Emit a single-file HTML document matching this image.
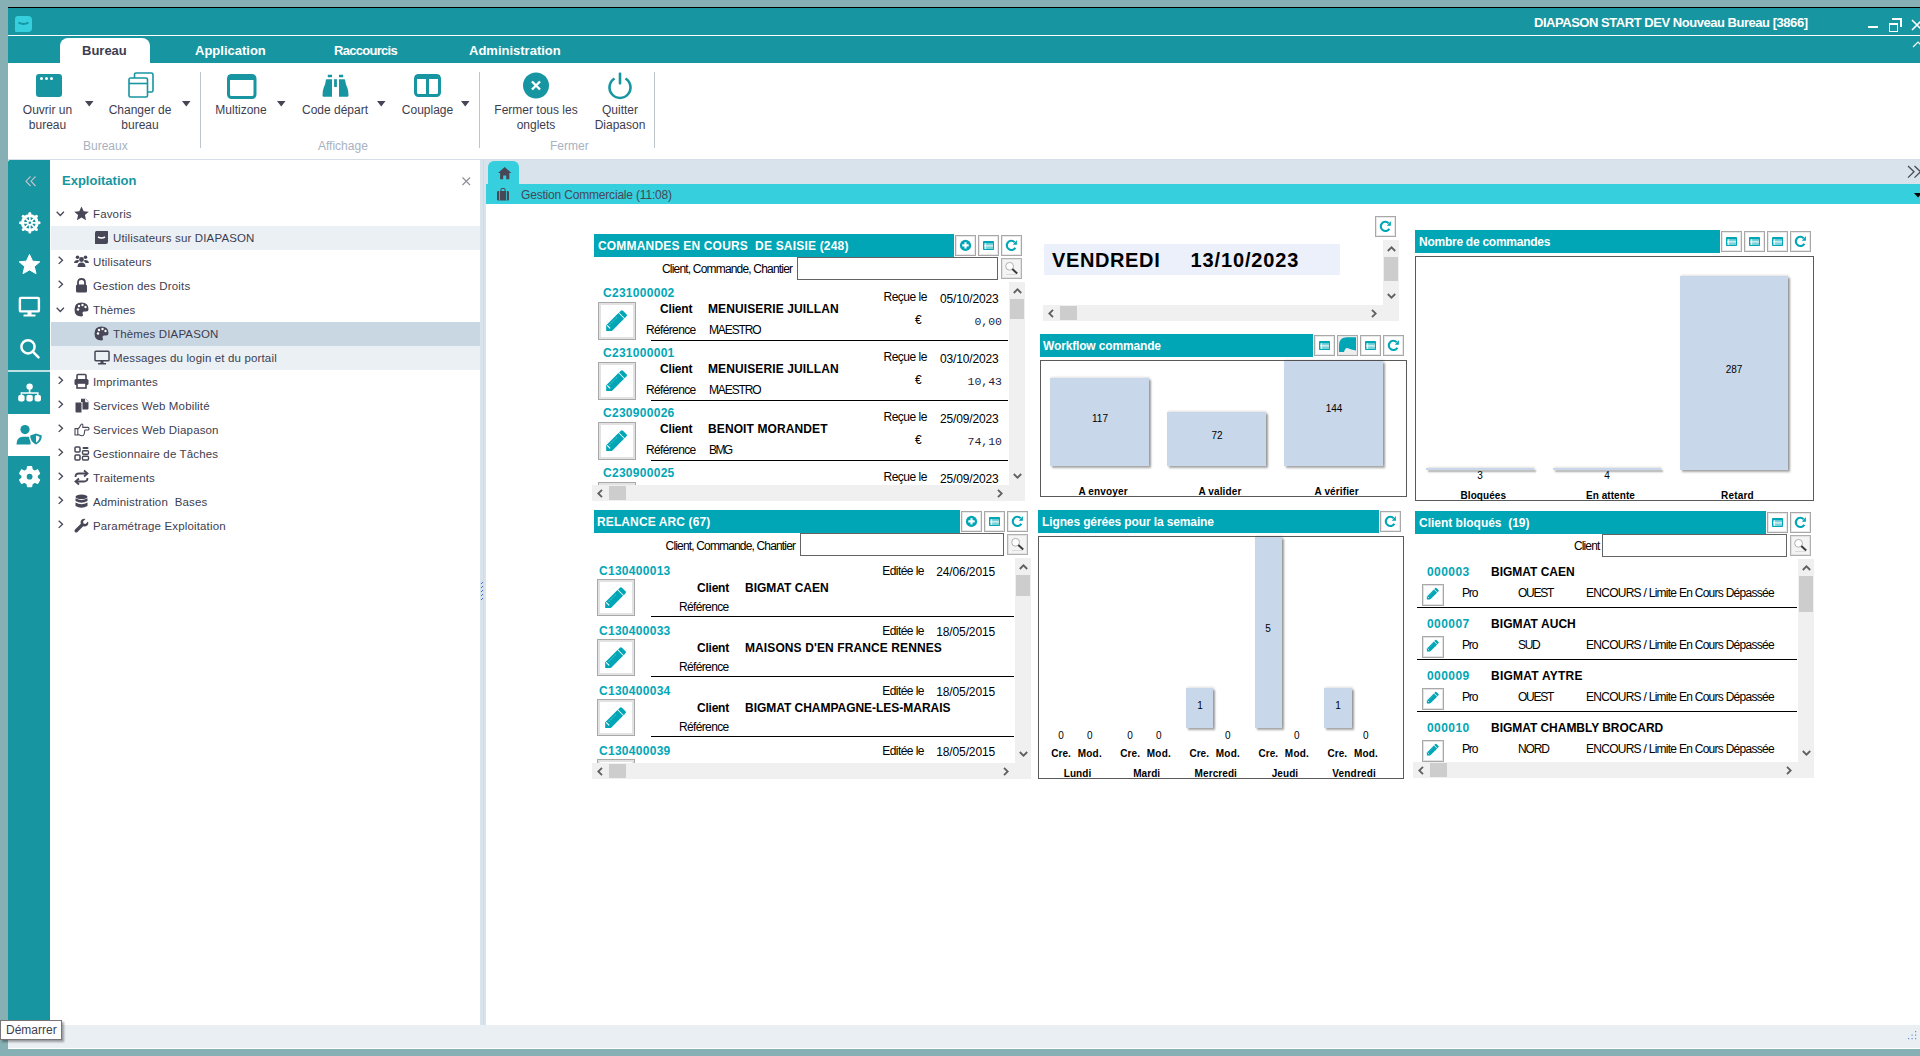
<!DOCTYPE html>
<html><head><meta charset="utf-8">
<style>
*{margin:0;padding:0;box-sizing:border-box}
html,body{width:1920px;height:1056px;overflow:hidden;background:#87B0B5;font-family:"Liberation Sans",sans-serif}
.a{position:absolute}
.t{position:absolute;white-space:nowrap;line-height:1}
svg{position:absolute;overflow:visible}
.rb{font-size:12px;color:#3D3D50;text-align:center;line-height:15px}
.grp{font-size:12px;color:#A8B2C0}
.tr{font-size:11.5px;color:#3D3D50;letter-spacing:0.15px}
</style><style>
.ph{font-size:12px;font-weight:bold;color:#fff}
.pt{font-size:12px;color:#000}
.pb{font-size:12px;font-weight:bold;color:#000}
.pid{font-size:12px;font-weight:bold;color:#00A6B6}
.pm{font-family:"Liberation Mono",monospace;font-size:11.5px;color:#1E1E40}
.pd{font-size:20px;font-weight:bold;color:#000}
.hb{border:1px solid #A8A8A8;box-shadow:inset 0 0 0 1px #E8E8E8}
.sb{border:1px solid #B0B0B0;background:#E2E2E2}
.eb{border:1px solid #A8A8A8;background:#fff;box-shadow:inset 0 0 0 2px #E2E2E2}
.ebs{box-shadow:inset 0 0 0 1px #E2E2E2}
.bar{background:#C8D8EA;box-shadow:2px 2px 2px rgba(0,0,0,0.35),1px -1px 2px rgba(0,0,0,0.12)}
.cl{font-size:10px;color:#000}
.clb{font-size:10px;font-weight:bold;color:#000}
</style></head><body>
<!-- window bg -->
<div class="a" style="left:8px;top:7px;width:1912px;height:1042px;background:#fff"></div>
<!-- title bar -->
<div class="a" style="left:8px;top:7px;width:1912px;height:1px;background:#000"></div>
<div class="a" style="left:8px;top:8px;width:1912px;height:27px;background:#1795A1"></div>
<div class="a" style="left:8px;top:35px;width:1912px;height:1px;background:#fff"></div>
<div class="a" style="left:8px;top:36px;width:1912px;height:27px;background:#1795A1"></div>
<!-- app icon -->
<div class="a" style="left:15px;top:16px;width:17px;height:16px;background:#35CFDD;border-radius:3px 4px 4px 1px"></div>
<svg style="left:15px;top:16px" width="17" height="16"><path d="M3.5 6.5 Q8.5 9.5 13.5 6.5" stroke="#1795A1" stroke-width="2" fill="none"/></svg>
<div class="t" style="left:1534.00px;top:16px;font-size:13px;font-weight:bold;color:#fff;letter-spacing:-0.464px">DIAPASON START DEV Nouveau Bureau [3866]</div>
<!-- window controls -->
<div class="a" style="left:1868px;top:26px;width:10px;height:2px;background:#fff"></div>
<div class="a" style="left:1889px;top:23px;width:9px;height:9px;border:1px solid #fff;border-top-width:2px"></div>
<div class="a" style="left:1892px;top:18px;width:10px;height:2px;background:#fff"></div>
<div class="a" style="left:1900px;top:18px;width:2px;height:9px;background:#fff"></div>
<svg style="left:1912px;top:20px" width="10" height="10"><path d="M0 0 L10 10 M10 0 L0 10" stroke="#fff" stroke-width="1.6"/></svg>
<svg style="left:1913px;top:41px" width="8" height="6"><path d="M0 6 L5 1 L10 6" stroke="#fff" stroke-width="1.2" fill="none"/></svg>
<!-- ribbon tabs -->
<div class="a" style="left:60px;top:38px;width:90px;height:25px;background:#fff;border-radius:8px 8px 0 0"></div>
<div class="t" style="left:82px;top:44px;font-size:13px;font-weight:bold;color:#3D3D50">Bureau</div>
<div class="t" style="left:195px;top:44px;font-size:13px;font-weight:bold;color:#fff">Application</div>
<div class="t" style="left:334.00px;top:44px;font-size:13px;font-weight:bold;color:#fff;letter-spacing:-0.705px">Raccourcis</div>
<div class="t" style="left:469px;top:44px;font-size:13px;font-weight:bold;color:#fff">Administration</div>

<!-- ribbon buttons -->
<div class="a" style="left:36px;top:74px;width:26px;height:23px;background:#1795A1;border-radius:3px"></div>
<div class="a" style="left:40px;top:77px;width:3px;height:3px;background:#fff;border-radius:50%"></div>
<div class="a" style="left:45px;top:77px;width:3px;height:3px;background:#fff;border-radius:50%"></div>
<div class="a" style="left:50px;top:77px;width:3px;height:3px;background:#fff;border-radius:50%"></div>
<svg style="left:128px;top:72px" width="27" height="27"><rect x="6.5" y="1" width="18.5" height="19" rx="1.5" fill="#fff" stroke="#1795A1" stroke-width="1.6"/><rect x="1" y="6" width="18.5" height="19" rx="1.5" fill="#fff" stroke="#1795A1" stroke-width="1.6"/><path d="M1 11.5 H19.5" stroke="#1795A1" stroke-width="1.6"/></svg>
<svg style="left:227px;top:74px" width="30" height="25"><rect x="1.5" y="1.5" width="26.5" height="22" rx="3" fill="none" stroke="#1795A1" stroke-width="3"/><rect x="1" y="1" width="27" height="5" fill="#1795A1"/></svg>
<svg style="left:322px;top:74px" width="27" height="23"><path d="M5.8 0.7 H10 V3.3 H5.8Z M17 0.7 H21.2 V3.3 H17Z" fill="#1795A1"/><path d="M10 5.2 H4.8 Q4 5.2 3.9 6 Q3.6 10 1.6 14 Q0.4 17 0.5 21.5 Q0.5 22.8 1.8 22.8 H10Z M17 5.2 H22.2 Q23 5.2 23.1 6 Q23.4 10 25.4 14 Q26.6 17 26.5 21.5 Q26.5 22.8 25.2 22.8 H17Z" fill="#1795A1"/><rect x="12.1" y="5.2" width="2.8" height="7.8" fill="#1795A1"/></svg>
<svg style="left:414px;top:74px" width="27" height="23"><rect x="1.5" y="1.5" width="24" height="20" rx="3" fill="none" stroke="#1795A1" stroke-width="3"/><rect x="1" y="1" width="25" height="4" fill="#1795A1"/><rect x="12" y="2" width="3" height="20" fill="#1795A1"/></svg>
<svg style="left:523px;top:72px" width="27" height="27"><circle cx="13" cy="13.5" r="13" fill="#1795A1"/><path d="M9 9.5 L17 17.5 M17 9.5 L9 17.5" stroke="#fff" stroke-width="2.4"/></svg>
<svg style="left:607px;top:72px" width="27" height="27"><path d="M7.5 6.5 A10.5 10.5 0 1 0 18.5 6.5" fill="none" stroke="#1795A1" stroke-width="2.6"/><rect x="11.7" y="0.5" width="2.6" height="12" rx="1" fill="#1795A1"/></svg>
<svg style="left:85px;top:101px" width="9" height="6"><path d="M0 0 H8.5 L4.25 5.5Z" fill="#454555"/></svg>
<svg style="left:182px;top:101px" width="9" height="6"><path d="M0 0 H8.5 L4.25 5.5Z" fill="#454555"/></svg>
<svg style="left:277px;top:101px" width="9" height="6"><path d="M0 0 H8.5 L4.25 5.5Z" fill="#454555"/></svg>
<svg style="left:377px;top:101px" width="9" height="6"><path d="M0 0 H8.5 L4.25 5.5Z" fill="#454555"/></svg>
<svg style="left:461px;top:101px" width="9" height="6"><path d="M0 0 H8.5 L4.25 5.5Z" fill="#454555"/></svg>
<div class="t rb" style="left:10px;top:103px;width:75px">Ouvrir un<br>bureau</div>
<div class="t rb" style="left:100px;top:103px;width:80px">Changer de<br>bureau</div>
<div class="t rb" style="left:205px;top:103px;width:72px">Multizone</div>
<div class="t rb" style="left:295px;top:103px;width:80px">Code départ</div>
<div class="t rb" style="left:390px;top:103px;width:75px">Couplage</div>
<div class="t rb" style="left:486px;top:103px;width:100px">Fermer tous les<br>onglets</div>
<div class="t rb" style="left:585px;top:103px;width:70px">Quitter<br>Diapason</div>
<div class="t grp" style="left:83px;top:140px">Bureaux</div>
<div class="t grp" style="left:318px;top:140px">Affichage</div>
<div class="t grp" style="left:550px;top:140px">Fermer</div>
<div class="a" style="left:200px;top:72px;width:1px;height:76px;background:#BCC4CC"></div>
<div class="a" style="left:479px;top:72px;width:1px;height:76px;background:#BCC4CC"></div>
<div class="a" style="left:654px;top:72px;width:1px;height:76px;background:#BCC4CC"></div>

<!-- sidebar -->
<div class="a" style="left:8px;top:160px;width:42px;height:865px;background:#1795A1;border-top-left-radius:2px"></div>
<svg style="left:25px;top:176px" width="11" height="11"><path d="M5.5 0.5 L1 5.2 L5.5 10 M10.5 0.5 L6 5.2 L10.5 10" stroke="#C6C2CC" stroke-width="1.1" fill="none"/></svg>
<svg style="left:19px;top:212px" width="22" height="22"><g transform="translate(10.8,10.8)"><circle r="7.4" stroke="#fff" stroke-width="3" fill="none"/><circle cx="9.30" cy="0.00" r="1.5" fill="#fff"/><circle cx="6.58" cy="6.58" r="1.5" fill="#fff"/><circle cx="0.00" cy="9.30" r="1.5" fill="#fff"/><circle cx="-6.58" cy="6.58" r="1.5" fill="#fff"/><circle cx="-9.30" cy="0.00" r="1.5" fill="#fff"/><circle cx="-6.58" cy="-6.58" r="1.5" fill="#fff"/><circle cx="-0.00" cy="-9.30" r="1.5" fill="#fff"/><circle cx="6.58" cy="-6.58" r="1.5" fill="#fff"/><path d="M0 -7 V7 M-7 0 H7 M-4.95 -4.95 L4.95 4.95 M4.95 -4.95 L-4.95 4.95" stroke="#fff" stroke-width="1.7"/><circle r="3" fill="#fff"/><circle r="1.3" fill="#1795A1"/></g></svg>
<svg style="left:19px;top:254px" width="22" height="22"><path d="M10.5 0.5 L13.6 7.2 L20.8 7.8 L15.3 12.6 L17 19.7 L10.5 15.9 L4 19.7 L5.7 12.6 L0.2 7.8 L7.4 7.2Z" fill="#fff" stroke="#fff" stroke-width="1" stroke-linejoin="round"/></svg>
<svg style="left:18px;top:296px" width="24" height="22"><rect x="1.9" y="1.9" width="19" height="13.5" rx="1" fill="none" stroke="#fff" stroke-width="2.4"/><rect x="9.5" y="16" width="4" height="3" fill="#fff"/><rect x="5.5" y="18.5" width="12" height="2" fill="#fff"/></svg>
<svg style="left:18px;top:337px" width="24" height="24"><circle cx="10" cy="9.8" r="6.6" fill="none" stroke="#fff" stroke-width="2.5"/><path d="M14.8 14.6 L20.5 20.3" stroke="#fff" stroke-width="2.6" stroke-linecap="round"/></svg>
<div class="a" style="left:8px;top:370px;width:42px;height:2px;background:#C0E0E4"></div>
<svg style="left:18px;top:383px" width="24" height="20"><circle cx="11.6" cy="3.6" r="3.2" fill="#fff"/><path d="M11.6 5 V10 M3.4 15 V10 H19.8 V15" stroke="#fff" stroke-width="1.6" fill="none"/><rect x="0.2" y="12" width="6.4" height="6.4" rx="1.8" fill="#fff"/><rect x="8.4" y="12" width="6.4" height="6.4" rx="1.8" fill="#fff"/><rect x="16.6" y="12" width="6.4" height="6.4" rx="1.8" fill="#fff"/></svg>
<div class="a" style="left:8px;top:414px;width:42px;height:42px;background:#fff"></div>
<svg style="left:16px;top:424px" width="28" height="22"><circle cx="9" cy="5.6" r="4.6" fill="#1795A1"/><path d="M0.5 20.5 Q0.5 13 7 12.8 H12 Q14 12.8 14.5 13.5 V20.5Z" fill="#1795A1"/><path d="M20 9.5 L25.8 11.6 Q26 17.5 20 20.5 Q14 17.5 14.2 11.6Z" fill="#fff" stroke="#fff" stroke-width="2.4"/><path d="M20 9.5 L25.8 11.6 Q26 17.5 20 20.5 Q14 17.5 14.2 11.6Z" fill="#1795A1"/><path d="M20 11.6 L23.5 12.8 Q23.5 16.6 20 18.5Z" fill="#fff"/></svg>
<svg style="left:19px;top:466px" width="22" height="22"><g transform="translate(10.6,10.7)"><path d="M-2 -10 H2 L2.6 -7 L5.3 -5.5 L8 -6.8 L10 -3.2 L7.6 -1.2 V1.2 L10 3.2 L8 6.8 L5.3 5.5 L2.6 7 L2 10 H-2 L-2.6 7 L-5.3 5.5 L-8 6.8 L-10 3.2 L-7.6 1.2 V-1.2 L-10 -3.2 L-8 -6.8 L-5.3 -5.5 L-2.6 -7Z" fill="#fff" stroke="#fff" stroke-width="1.2" stroke-linejoin="round"/><circle r="2.9" fill="#1795A1"/></g></svg>

<!-- tree panel -->
<div class="t" style="left:62px;top:174px;font-size:13px;font-weight:bold;color:#1795A1">Exploitation</div>
<svg style="left:462px;top:177px" width="9" height="9"><path d="M0.5 0.5 L8 8 M8 0.5 L0.5 8" stroke="#8E8E9A" stroke-width="1.2"/></svg>
<div class="a" style="left:51px;top:226px;width:429px;height:24px;background:#EBF0F4"></div>
<div class="a" style="left:51px;top:322px;width:429px;height:24px;background:#C9D7E3"></div>
<div class="a" style="left:51px;top:346px;width:429px;height:24px;background:#EBF0F4"></div>
<svg style="left:56px;top:211px" width="9" height="6"><path d="M0.7 0.7 L4.3 4.5 L7.9 0.7" stroke="#474757" stroke-width="1.3" fill="none"/></svg>
<svg style="left:74px;top:206px" width="15" height="15"><path d="M7.5 0.5 L9.7 5.2 L14.8 5.7 L10.9 9.1 L12.1 14.2 L7.5 11.5 L2.9 14.2 L4.1 9.1 L0.2 5.7 L5.3 5.2Z" fill="#474757"/></svg>
<div class="t tr" style="left:93px;top:209px">Favoris</div>
<svg style="left:94px;top:230px" width="15" height="15"><path d="M2.5 1 H13.5 Q14 1 14 2 V12 Q14 14 12 14 H1 V3 Q1 1 2.5 1Z" fill="#474757"/><path d="M4 7 Q7.5 9 11 7" stroke="#fff" stroke-width="1.6" fill="none"/></svg>
<div class="t tr" style="left:113px;top:233px">Utilisateurs sur DIAPASON</div>
<svg style="left:58px;top:256px" width="6" height="9"><path d="M0.7 0.7 L4.5 4.3 L0.7 7.9" stroke="#474757" stroke-width="1.3" fill="none"/></svg>
<svg style="left:74px;top:254px" width="15" height="15"><circle cx="3.5" cy="3.2" r="1.8" fill="#474757"/><circle cx="11.5" cy="3.2" r="1.8" fill="#474757"/><circle cx="7.5" cy="5.5" r="2.4" fill="#474757"/><path d="M0 9 Q0.5 6 3.5 6 Q5 6 5.5 7 Q3.5 8 3.5 9Z M15 9 Q14.5 6 11.5 6 Q10 6 9.5 7 Q11.5 8 11.5 9Z" fill="#474757"/><path d="M3.5 13 Q3.5 8.5 7.5 8.5 Q11.5 8.5 11.5 13Z" fill="#474757"/></svg>
<div class="t tr" style="left:93px;top:257px">Utilisateurs</div>
<svg style="left:58px;top:280px" width="6" height="9"><path d="M0.7 0.7 L4.5 4.3 L0.7 7.9" stroke="#474757" stroke-width="1.3" fill="none"/></svg>
<svg style="left:74px;top:278px" width="15" height="15"><path d="M4 7 V4.5 Q4 1 7.5 1 Q11 1 11 4.5 V7" stroke="#474757" stroke-width="1.8" fill="none"/><rect x="2" y="6.5" width="11" height="8" rx="1.5" fill="#474757"/></svg>
<div class="t tr" style="left:93px;top:281px">Gestion des Droits</div>
<svg style="left:56px;top:307px" width="9" height="6"><path d="M0.7 0.7 L4.3 4.5 L7.9 0.7" stroke="#474757" stroke-width="1.3" fill="none"/></svg>
<svg style="left:74px;top:302px" width="15" height="15"><path d="M7.5 0.5 Q14.5 0.5 14.5 7 Q14.5 9.5 12 9.5 H10 Q8.5 9.5 8.5 11 Q8.5 12 9 12.5 Q9.3 14.5 7.5 14.5 Q0.5 14.5 0.5 7.5 Q0.5 0.5 7.5 0.5Z" fill="#474757"/><circle cx="4" cy="7.5" r="1.2" fill="#fff"/><circle cx="5" cy="4" r="1.2" fill="#fff"/><circle cx="8.5" cy="3" r="1.2" fill="#fff"/><circle cx="11.5" cy="5" r="1.2" fill="#fff"/></svg>
<div class="t tr" style="left:93px;top:305px">Thèmes</div>
<svg style="left:94px;top:326px" width="15" height="15"><path d="M7.5 0.5 Q14.5 0.5 14.5 7 Q14.5 9.5 12 9.5 H10 Q8.5 9.5 8.5 11 Q8.5 12 9 12.5 Q9.3 14.5 7.5 14.5 Q0.5 14.5 0.5 7.5 Q0.5 0.5 7.5 0.5Z" fill="#474757"/><circle cx="4" cy="7.5" r="1.2" fill="#fff"/><circle cx="5" cy="4" r="1.2" fill="#fff"/><circle cx="8.5" cy="3" r="1.2" fill="#fff"/><circle cx="11.5" cy="5" r="1.2" fill="#fff"/></svg>
<div class="t tr" style="left:113px;top:329px">Thèmes DIAPASON</div>
<svg style="left:94px;top:350px" width="15" height="15"><rect x="1" y="1.3" width="14" height="9.5" rx="0.8" fill="none" stroke="#474757" stroke-width="1.5"/><rect x="6.5" y="11" width="3" height="2" fill="#474757"/><rect x="4" y="13" width="8" height="1.5" fill="#474757"/></svg>
<div class="t tr" style="left:113px;top:353px">Messages du login et du portail</div>
<svg style="left:58px;top:376px" width="6" height="9"><path d="M0.7 0.7 L4.5 4.3 L0.7 7.9" stroke="#474757" stroke-width="1.3" fill="none"/></svg>
<svg style="left:74px;top:374px" width="15" height="15"><path d="M3 5 V1.5 Q3 0.5 4 0.5 H11 Q12 0.5 12 1.5 V5" stroke="#474757" stroke-width="1.6" fill="none"/><rect x="0.5" y="5" width="14" height="6" rx="1.5" fill="#474757"/><rect x="3" y="9" width="9" height="5" fill="#fff" stroke="#474757" stroke-width="1.6"/></svg>
<div class="t tr" style="left:93px;top:377px">Imprimantes</div>
<svg style="left:58px;top:400px" width="6" height="9"><path d="M0.7 0.7 L4.5 4.3 L0.7 7.9" stroke="#474757" stroke-width="1.3" fill="none"/></svg>
<svg style="left:74px;top:398px" width="15" height="15"><path d="M1.5 4.5 H7.5 V14.5 H2.5 Q1.5 14.5 1.5 13.5Z" fill="#474757"/><path d="M7 0.8 H11.8 L14.5 3.5 V10.5 Q14.5 11.5 13.5 11.5 H8.5 V4 H7Z" fill="#474757"/><path d="M11.5 0.8 V3.8 H14.5" fill="#fff" stroke="#fff" stroke-width="0.8"/></svg>
<div class="t tr" style="left:93px;top:401px">Services Web Mobilité</div>
<svg style="left:58px;top:424px" width="6" height="9"><path d="M0.7 0.7 L4.5 4.3 L0.7 7.9" stroke="#474757" stroke-width="1.3" fill="none"/></svg>
<svg style="left:74px;top:422px" width="15" height="15"><path d="M1 6.6 H3.8 V13 H1Z M3.8 6.9 Q5.5 6 6.6 3.3 Q7.2 1.8 8.2 2 Q9.3 2.3 8.8 4.8 V5.4 H13.8 Q15 5.4 15 6.7 Q15 8 13.8 8 H10.8 Q10.6 10 10.2 12 Q9.8 13.8 8.2 13.8 Q6.5 13.8 5 12.8 L3.8 12.4" fill="none" stroke="#474757" stroke-width="1.1" stroke-linejoin="round"/></svg>
<div class="t tr" style="left:93px;top:425px">Services Web Diapason</div>
<svg style="left:58px;top:448px" width="6" height="9"><path d="M0.7 0.7 L4.5 4.3 L0.7 7.9" stroke="#474757" stroke-width="1.3" fill="none"/></svg>
<svg style="left:74px;top:446px" width="15" height="15"><rect x="1" y="1" width="5" height="5" rx="1" fill="none" stroke="#474757" stroke-width="1.5"/><rect x="1" y="9" width="5" height="5" rx="1" fill="none" stroke="#474757" stroke-width="1.5"/><rect x="8.5" y="1" width="6" height="2" rx="1" fill="#474757"/><rect x="8.5" y="4.8" width="6" height="3.5" rx="1" fill="none" stroke="#474757" stroke-width="1.4"/><rect x="8.5" y="10.2" width="6" height="3.8" rx="1" fill="none" stroke="#474757" stroke-width="1.4"/></svg>
<div class="t tr" style="left:93px;top:449px">Gestionnaire de Tâches</div>
<svg style="left:58px;top:472px" width="6" height="9"><path d="M0.7 0.7 L4.5 4.3 L0.7 7.9" stroke="#474757" stroke-width="1.3" fill="none"/></svg>
<svg style="left:74px;top:470px" width="15" height="15"><path d="M1.5 7 Q1.5 3.5 5 3.5 H12" stroke="#474757" stroke-width="1.8" fill="none"/><path d="M10 0.5 L13.5 3.5 L10 6.5" stroke="#474757" stroke-width="1.8" fill="none"/><path d="M13.5 8 Q13.5 11.5 10 11.5 H3" stroke="#474757" stroke-width="1.8" fill="none"/><path d="M5 8.5 L1.5 11.5 L5 14.5" stroke="#474757" stroke-width="1.8" fill="none"/></svg>
<div class="t tr" style="left:93px;top:473px">Traitements</div>
<svg style="left:58px;top:496px" width="6" height="9"><path d="M0.7 0.7 L4.5 4.3 L0.7 7.9" stroke="#474757" stroke-width="1.3" fill="none"/></svg>
<svg style="left:74px;top:494px" width="15" height="15"><ellipse cx="7.5" cy="2.8" rx="6" ry="2.3" fill="#474757"/><path d="M1.5 4.3 Q7.5 7.8 13.5 4.3 V7 Q7.5 10.3 1.5 7Z" fill="#474757"/><path d="M1.5 8.6 Q7.5 12 13.5 8.6 V12 Q7.5 15.5 1.5 12Z" fill="#474757"/></svg>
<div class="t tr" style="left:93px;top:497px">Administration&nbsp; Bases</div>
<svg style="left:58px;top:520px" width="6" height="9"><path d="M0.7 0.7 L4.5 4.3 L0.7 7.9" stroke="#474757" stroke-width="1.3" fill="none"/></svg>
<svg style="left:74px;top:518px" width="15" height="15"><path d="M14 3.5 L11.5 6 L9.5 5.5 L9 3.5 L11.5 1 Q8.5 0 7 2.5 Q6.2 4 6.8 5.8 L0.8 11.8 Q0 13 1 14 Q2 15 3.2 14.2 L9.2 8.2 Q11 8.8 12.5 8 Q15 6.5 14 3.5Z" fill="#474757"/></svg>
<div class="t tr" style="left:93px;top:521px">Paramétrage Exploitation</div>

<!-- splitter -->
<div class="a" style="left:480px;top:160px;width:6px;height:865px;background:#D9E3EB"></div>
<div class="a" style="left:483px;top:160px;width:1px;height:865px;background:#C0DCFF"></div><div class="a" style="left:481px;top:583px;width:1px;height:1px;background:#2F6FD6"></div><div class="a" style="left:482px;top:582px;width:1px;height:1px;background:#2F6FD6"></div><div class="a" style="left:481px;top:587px;width:1px;height:1px;background:#2F6FD6"></div><div class="a" style="left:482px;top:586px;width:1px;height:1px;background:#2F6FD6"></div><div class="a" style="left:481px;top:591px;width:1px;height:1px;background:#2F6FD6"></div><div class="a" style="left:482px;top:590px;width:1px;height:1px;background:#2F6FD6"></div><div class="a" style="left:481px;top:595px;width:1px;height:1px;background:#2F6FD6"></div><div class="a" style="left:482px;top:594px;width:1px;height:1px;background:#2F6FD6"></div><div class="a" style="left:481px;top:599px;width:1px;height:1px;background:#2F6FD6"></div><div class="a" style="left:482px;top:598px;width:1px;height:1px;background:#2F6FD6"></div>

<!-- content tab strip -->
<div class="a" style="left:486px;top:159px;width:1434px;height:25px;background:#D9E3EB"></div>
<div class="a" style="left:488px;top:161px;width:31px;height:23px;background:#35CFDD;border-radius:6px 6px 0 0"></div>
<svg style="left:498px;top:167px" width="14" height="13"><path d="M6.7 0 L13.4 6 H11.3 V12.3 H8.2 V8.6 H5.2 V12.3 H2.1 V6 H0Z" fill="#474757"/></svg>
<svg style="left:1907px;top:165px" width="20" height="14"><path d="M1 1 L7 6.8 L1 12.6 M7.5 1 L13.5 6.8 L7.5 12.6" stroke="#474757" stroke-width="1.3" fill="none"/></svg>
<div class="a" style="left:486px;top:184px;width:1434px;height:20px;background:#35CFDD"></div>
<svg style="left:497px;top:188px" width="13" height="13"><rect x="0" y="3" width="12" height="9.5" rx="1.2" fill="#474757"/><rect x="4" y="0.5" width="4" height="3" rx="0.5" fill="none" stroke="#474757" stroke-width="1"/><rect x="2.2" y="3" width="0.8" height="9.5" fill="#35CFDD"/><rect x="9" y="3" width="0.8" height="9.5" fill="#35CFDD"/></svg>
<div class="t" style="left:521.00px;top:189px;font-size:12px;color:#474757;letter-spacing:-0.186px">Gestion Commerciale (11:08)</div>
<svg style="left:1914px;top:193px" width="10" height="6"><path d="M0 0 H8 L4 4.5Z" fill="#000"/></svg>
<!-- status bar -->
<div class="a" style="left:8px;top:1025px;width:1912px;height:23px;background:#EAEFF3"></div>
<div class="a" style="left:8px;top:1048px;width:1912px;height:1px;background:#fff"></div>
<div class="a" style="left:0px;top:1020px;width:62px;height:20px;background:#fff;border:1px solid #767676;box-shadow:2px 2px 2px rgba(0,0,0,0.35)"></div>
<div class="t" style="left:6px;top:1024px;font-size:12px;color:#3D3D50">Démarrer</div>
<svg style="left:1908px;top:1030px" width="12" height="12"><g fill="#6A8FD0"><rect x="7" y="1" width="1.2" height="1.2"/><rect x="3.5" y="4.5" width="1.2" height="1.2"/><rect x="7" y="4.5" width="1.2" height="1.2"/><rect x="0" y="8" width="1.2" height="1.2"/><rect x="3.5" y="8" width="1.2" height="1.2"/><rect x="7" y="8" width="1.2" height="1.2"/></g></svg>
<div class="a" style="left:594px;top:234px;width:360px;height:23px;background:#00A6B6"></div>
<div class="t ph" style="left:598.00px;top:240px;letter-spacing:0.187px">COMMANDES EN COURS&nbsp; DE SAISIE (248)</div>
<div class="a hb" style="left:955px;top:235px;width:21px;height:21px;background:#fff"><svg width="19" height="19" style="left:0;top:0"><circle cx="9.5" cy="9.4" r="5.6" fill="#00A6B6"/><path d="M9.5 6.2 V12.6 M6.3 9.4 H12.7" stroke="#fff" stroke-width="2.1"/></svg></div>
<div class="a hb" style="left:978px;top:235px;width:21px;height:21px;background:#fff"><svg width="19" height="19" style="left:0;top:0"><rect x="4" y="5" width="11" height="9" rx="0.8" fill="#00A6B6"/><rect x="5" y="7.2" width="9" height="5.8" fill="#7CD2D9"/><path d="M5 9.9 H14" stroke="#fff" stroke-width="0.9"/><path d="M6.6 7.2 V13" stroke="#fff" stroke-width="0.8"/></svg></div>
<div class="a hb" style="left:1001px;top:235px;width:21px;height:21px;background:#fff"><svg width="19" height="19" style="left:0;top:0"><path d="M12.65 6.15 A4.6 4.6 0 1 0 13.4 11.7" fill="none" stroke="#00A6B6" stroke-width="2.1"/><path d="M10.8 8.8 L14.9 4 V8.8Z" fill="#00A6B6"/></svg></div>
<div class="t pt" style="left:662.00px;top:263px;letter-spacing:-0.816px">Client, Commande, Chantier</div>
<div class="a" style="left:797px;top:257px;width:201px;height:23px;border:1px solid #646464;background:#fff"></div>
<div class="a sb" style="left:1001px;top:258px;width:21px;height:21px"><div class="a" style="left:1px;top:1px;width:17px;height:17px;background:#F4F4F4"></div><svg width="19" height="19" style="left:0;top:0"><circle cx="7.6" cy="7.3" r="3.9" fill="#fff" stroke="#B0B0B0" stroke-width="1"/><path d="M10.3 10 L15.2 14.4" stroke="#3A3A3A" stroke-width="2"/><path d="M4 15.5 H15" stroke="#DADADA" stroke-width="1"/></svg></div>
<div class="a" style="left:592px;top:282px;width:417px;height:203px;overflow:hidden">
<div class="t pid" style="left:11.00px;top:5px;letter-spacing:0.285px">C231000002</div>
<div class="t pt" style="left:291.50px;top:9px;letter-spacing:-0.496px">Reçue le</div>
<div class="t pt" style="left:348.00px;top:11px;letter-spacing:-0.162px">05/10/2023</div>
<div class="a eb" style="left:6px;top:20px;width:38px;height:38px"><svg width="36" height="36" style="left:0;top:0"><g transform="translate(7.2,28) rotate(-45)"><path d="M0 0 L4 -4 H21.3 V4 H4Z" fill="#00A6B6"/><path d="M22.2 -4 H24.7 Q26.2 -4 26.2 -2.5 V2.5 Q26.2 4 24.7 4 H22.2Z" fill="#00A6B6"/><path d="M4.6 -3.2 L4.6 1" stroke="#fff" stroke-width="1.1"/><path d="M6.5 -2 H17.5" stroke="#7AD3DA" stroke-width="0.8" stroke-dasharray="1 0.6"/></g></svg></div>
<div class="t pb" style="left:68.00px;top:21px;letter-spacing:-0.169px">Client</div>
<div class="t pb" style="left:116.00px;top:21px;letter-spacing:0.112px">MENUISERIE JUILLAN</div>
<div class="t pt" style="left:323.00px;top:32px;letter-spacing:0.000px">€</div>
<div class="t pm" style="left:330px;top:34px;width:80px;text-align:right">0,00</div>
<div class="t pt" style="left:54.00px;top:42px;letter-spacing:-0.647px">Référence</div>
<div class="t pt" style="left:117.00px;top:42px;letter-spacing:-1.124px">MAESTRO</div>
<div class="a" style="left:59px;top:58px;width:357px;height:1px;background:#000"></div>
<div class="t pid" style="left:11.00px;top:65px;letter-spacing:0.285px">C231000001</div>
<div class="t pt" style="left:291.50px;top:69px;letter-spacing:-0.496px">Reçue le</div>
<div class="t pt" style="left:348.00px;top:71px;letter-spacing:-0.162px">03/10/2023</div>
<div class="a eb" style="left:6px;top:80px;width:38px;height:38px"><svg width="36" height="36" style="left:0;top:0"><g transform="translate(7.2,28) rotate(-45)"><path d="M0 0 L4 -4 H21.3 V4 H4Z" fill="#00A6B6"/><path d="M22.2 -4 H24.7 Q26.2 -4 26.2 -2.5 V2.5 Q26.2 4 24.7 4 H22.2Z" fill="#00A6B6"/><path d="M4.6 -3.2 L4.6 1" stroke="#fff" stroke-width="1.1"/><path d="M6.5 -2 H17.5" stroke="#7AD3DA" stroke-width="0.8" stroke-dasharray="1 0.6"/></g></svg></div>
<div class="t pb" style="left:68.00px;top:81px;letter-spacing:-0.169px">Client</div>
<div class="t pb" style="left:116.00px;top:81px;letter-spacing:0.112px">MENUISERIE JUILLAN</div>
<div class="t pt" style="left:323.00px;top:92px;letter-spacing:0.000px">€</div>
<div class="t pm" style="left:330px;top:94px;width:80px;text-align:right">10,43</div>
<div class="t pt" style="left:54.00px;top:102px;letter-spacing:-0.647px">Référence</div>
<div class="t pt" style="left:117.00px;top:102px;letter-spacing:-1.124px">MAESTRO</div>
<div class="a" style="left:59px;top:118px;width:357px;height:1px;background:#000"></div>
<div class="t pid" style="left:11.00px;top:125px;letter-spacing:0.285px">C230900026</div>
<div class="t pt" style="left:291.50px;top:129px;letter-spacing:-0.496px">Reçue le</div>
<div class="t pt" style="left:348.00px;top:131px;letter-spacing:-0.162px">25/09/2023</div>
<div class="a eb" style="left:6px;top:140px;width:38px;height:38px"><svg width="36" height="36" style="left:0;top:0"><g transform="translate(7.2,28) rotate(-45)"><path d="M0 0 L4 -4 H21.3 V4 H4Z" fill="#00A6B6"/><path d="M22.2 -4 H24.7 Q26.2 -4 26.2 -2.5 V2.5 Q26.2 4 24.7 4 H22.2Z" fill="#00A6B6"/><path d="M4.6 -3.2 L4.6 1" stroke="#fff" stroke-width="1.1"/><path d="M6.5 -2 H17.5" stroke="#7AD3DA" stroke-width="0.8" stroke-dasharray="1 0.6"/></g></svg></div>
<div class="t pb" style="left:68.00px;top:141px;letter-spacing:-0.169px">Client</div>
<div class="t pb" style="left:116.00px;top:141px;letter-spacing:0.107px">BENOIT MORANDET</div>
<div class="t pt" style="left:323.00px;top:152px;letter-spacing:0.000px">€</div>
<div class="t pm" style="left:330px;top:154px;width:80px;text-align:right">74,10</div>
<div class="t pt" style="left:54.00px;top:162px;letter-spacing:-0.647px">Référence</div>
<div class="t pt" style="left:117.00px;top:162px;letter-spacing:-1.572px">BMG</div>
<div class="a" style="left:59px;top:178px;width:357px;height:1px;background:#000"></div>
<div class="t pid" style="left:11.00px;top:185px;letter-spacing:0.285px">C230900025</div>
<div class="t pt" style="left:291.50px;top:189px;letter-spacing:-0.496px">Reçue le</div>
<div class="t pt" style="left:348.00px;top:191px;letter-spacing:-0.162px">25/09/2023</div>
<div class="a eb" style="left:6px;top:200px;width:38px;height:38px"><svg width="36" height="36" style="left:0;top:0"><g transform="translate(7.2,28) rotate(-45)"><path d="M0 0 L4 -4 H21.3 V4 H4Z" fill="#00A6B6"/><path d="M22.2 -4 H24.7 Q26.2 -4 26.2 -2.5 V2.5 Q26.2 4 24.7 4 H22.2Z" fill="#00A6B6"/><path d="M4.6 -3.2 L4.6 1" stroke="#fff" stroke-width="1.1"/><path d="M6.5 -2 H17.5" stroke="#7AD3DA" stroke-width="0.8" stroke-dasharray="1 0.6"/></g></svg></div>
</div>
<div class="a" style="left:1009px;top:282px;width:16px;height:219px;background:#F0F0F0"></div>
<div class="a" style="left:1010px;top:299px;width:14px;height:20px;background:#CDCDCD"></div>
<svg style="left:1012.5px;top:288px" width="9" height="6"><path d="M0.8 5 L4.5 1.3 L8.2 5" stroke="#606060" stroke-width="1.8" fill="none"/></svg>
<svg style="left:1012.5px;top:473px" width="9" height="6"><path d="M0.8 1 L4.5 4.7 L8.2 1" stroke="#606060" stroke-width="1.8" fill="none"/></svg>
<div class="a" style="left:592px;top:485px;width:417px;height:16px;background:#F0F0F0"></div>
<div class="a" style="left:609px;top:486px;width:17px;height:14px;background:#CDCDCD"></div>
<svg style="left:597px;top:488.5px" width="6" height="9"><path d="M5 0.8 L1.3 4.5 L5 8.2" stroke="#606060" stroke-width="1.8" fill="none"/></svg>
<svg style="left:997px;top:488.5px" width="6" height="9"><path d="M1 0.8 L4.7 4.5 L1 8.2" stroke="#606060" stroke-width="1.8" fill="none"/></svg>
<div class="a" style="left:594px;top:510px;width:366px;height:23px;background:#00A6B6"></div>
<div class="t ph" style="left:597.00px;top:516px;letter-spacing:0.109px">RELANCE ARC (67)</div>
<div class="a hb" style="left:961px;top:511px;width:21px;height:21px;background:#fff"><svg width="19" height="19" style="left:0;top:0"><circle cx="9.5" cy="9.4" r="5.6" fill="#00A6B6"/><path d="M9.5 6.2 V12.6 M6.3 9.4 H12.7" stroke="#fff" stroke-width="2.1"/></svg></div>
<div class="a hb" style="left:984px;top:511px;width:21px;height:21px;background:#fff"><svg width="19" height="19" style="left:0;top:0"><rect x="4" y="5" width="11" height="9" rx="0.8" fill="#00A6B6"/><rect x="5" y="7.2" width="9" height="5.8" fill="#7CD2D9"/><path d="M5 9.9 H14" stroke="#fff" stroke-width="0.9"/><path d="M6.6 7.2 V13" stroke="#fff" stroke-width="0.8"/></svg></div>
<div class="a hb" style="left:1007px;top:511px;width:21px;height:21px;background:#fff"><svg width="19" height="19" style="left:0;top:0"><path d="M12.65 6.15 A4.6 4.6 0 1 0 13.4 11.7" fill="none" stroke="#00A6B6" stroke-width="2.1"/><path d="M10.8 8.8 L14.9 4 V8.8Z" fill="#00A6B6"/></svg></div>
<div class="t pt" style="left:665.60px;top:539.5px;letter-spacing:-0.840px">Client, Commande, Chantier</div>
<div class="a" style="left:800px;top:533px;width:204px;height:23px;border:1px solid #646464;background:#fff"></div>
<div class="a sb" style="left:1007px;top:534px;width:21px;height:21px"><div class="a" style="left:1px;top:1px;width:17px;height:17px;background:#F4F4F4"></div><svg width="19" height="19" style="left:0;top:0"><circle cx="7.6" cy="7.3" r="3.9" fill="#fff" stroke="#B0B0B0" stroke-width="1"/><path d="M10.3 10 L15.2 14.4" stroke="#3A3A3A" stroke-width="2"/><path d="M4 15.5 H15" stroke="#DADADA" stroke-width="1"/></svg></div>
<div class="a" style="left:592px;top:558px;width:423px;height:205px;overflow:hidden">
<div class="t pid" style="left:7.00px;top:7px;letter-spacing:0.285px">C130400013</div>
<div class="t pt" style="left:290.30px;top:7px;letter-spacing:-0.575px">Editée le</div>
<div class="t pt" style="left:344.20px;top:8px;letter-spacing:-0.118px">24/06/2015</div>
<div class="a eb" style="left:5px;top:21px;width:38px;height:37px"><svg width="36" height="36" style="left:0;top:0"><g transform="translate(7.2,28) rotate(-45)"><path d="M0 0 L4 -4 H21.3 V4 H4Z" fill="#00A6B6"/><path d="M22.2 -4 H24.7 Q26.2 -4 26.2 -2.5 V2.5 Q26.2 4 24.7 4 H22.2Z" fill="#00A6B6"/><path d="M4.6 -3.2 L4.6 1" stroke="#fff" stroke-width="1.1"/><path d="M6.5 -2 H17.5" stroke="#7AD3DA" stroke-width="0.8" stroke-dasharray="1 0.6"/></g></svg></div>
<div class="t pb" style="left:105.00px;top:24px;letter-spacing:-0.229px">Client</div>
<div class="t pb" style="left:153.00px;top:24px;letter-spacing:-0.018px">BIGMAT CAEN</div>
<div class="t pt" style="left:87.00px;top:43px;letter-spacing:-0.647px">Référence</div>
<div class="a" style="left:59px;top:58px;width:363px;height:1px;background:#000"></div>
<div class="t pid" style="left:7.00px;top:67px;letter-spacing:0.285px">C130400033</div>
<div class="t pt" style="left:290.30px;top:67px;letter-spacing:-0.575px">Editée le</div>
<div class="t pt" style="left:344.20px;top:68px;letter-spacing:-0.118px">18/05/2015</div>
<div class="a eb" style="left:5px;top:81px;width:38px;height:37px"><svg width="36" height="36" style="left:0;top:0"><g transform="translate(7.2,28) rotate(-45)"><path d="M0 0 L4 -4 H21.3 V4 H4Z" fill="#00A6B6"/><path d="M22.2 -4 H24.7 Q26.2 -4 26.2 -2.5 V2.5 Q26.2 4 24.7 4 H22.2Z" fill="#00A6B6"/><path d="M4.6 -3.2 L4.6 1" stroke="#fff" stroke-width="1.1"/><path d="M6.5 -2 H17.5" stroke="#7AD3DA" stroke-width="0.8" stroke-dasharray="1 0.6"/></g></svg></div>
<div class="t pb" style="left:105.00px;top:84px;letter-spacing:-0.229px">Client</div>
<div class="t pb" style="left:153.00px;top:84px;letter-spacing:0.104px">MAISONS D'EN FRANCE RENNES</div>
<div class="t pt" style="left:87.00px;top:103px;letter-spacing:-0.647px">Référence</div>
<div class="a" style="left:59px;top:118px;width:363px;height:1px;background:#000"></div>
<div class="t pid" style="left:7.00px;top:127px;letter-spacing:0.285px">C130400034</div>
<div class="t pt" style="left:290.30px;top:127px;letter-spacing:-0.575px">Editée le</div>
<div class="t pt" style="left:344.20px;top:128px;letter-spacing:-0.118px">18/05/2015</div>
<div class="a eb" style="left:5px;top:141px;width:38px;height:37px"><svg width="36" height="36" style="left:0;top:0"><g transform="translate(7.2,28) rotate(-45)"><path d="M0 0 L4 -4 H21.3 V4 H4Z" fill="#00A6B6"/><path d="M22.2 -4 H24.7 Q26.2 -4 26.2 -2.5 V2.5 Q26.2 4 24.7 4 H22.2Z" fill="#00A6B6"/><path d="M4.6 -3.2 L4.6 1" stroke="#fff" stroke-width="1.1"/><path d="M6.5 -2 H17.5" stroke="#7AD3DA" stroke-width="0.8" stroke-dasharray="1 0.6"/></g></svg></div>
<div class="t pb" style="left:105.00px;top:144px;letter-spacing:-0.229px">Client</div>
<div class="t pb" style="left:153.00px;top:144px;letter-spacing:-0.028px">BIGMAT CHAMPAGNE-LES-MARAIS</div>
<div class="t pt" style="left:87.00px;top:163px;letter-spacing:-0.647px">Référence</div>
<div class="a" style="left:59px;top:178px;width:363px;height:1px;background:#000"></div>
<div class="t pid" style="left:7.00px;top:187px;letter-spacing:0.285px">C130400039</div>
<div class="t pt" style="left:290.30px;top:187px;letter-spacing:-0.575px">Editée le</div>
<div class="t pt" style="left:344.20px;top:188px;letter-spacing:-0.118px">18/05/2015</div>
<div class="a eb" style="left:5px;top:201px;width:38px;height:37px"><svg width="36" height="36" style="left:0;top:0"><g transform="translate(7.2,28) rotate(-45)"><path d="M0 0 L4 -4 H21.3 V4 H4Z" fill="#00A6B6"/><path d="M22.2 -4 H24.7 Q26.2 -4 26.2 -2.5 V2.5 Q26.2 4 24.7 4 H22.2Z" fill="#00A6B6"/><path d="M4.6 -3.2 L4.6 1" stroke="#fff" stroke-width="1.1"/><path d="M6.5 -2 H17.5" stroke="#7AD3DA" stroke-width="0.8" stroke-dasharray="1 0.6"/></g></svg></div>
</div>
<div class="a" style="left:1015px;top:558px;width:16px;height:221px;background:#F0F0F0"></div>
<div class="a" style="left:1016px;top:575px;width:14px;height:21px;background:#CDCDCD"></div>
<svg style="left:1018.5px;top:564px" width="9" height="6"><path d="M0.8 5 L4.5 1.3 L8.2 5" stroke="#606060" stroke-width="1.8" fill="none"/></svg>
<svg style="left:1018.5px;top:751px" width="9" height="6"><path d="M0.8 1 L4.5 4.7 L8.2 1" stroke="#606060" stroke-width="1.8" fill="none"/></svg>
<div class="a" style="left:592px;top:763px;width:423px;height:16px;background:#F0F0F0"></div>
<div class="a" style="left:609px;top:764px;width:17px;height:14px;background:#CDCDCD"></div>
<svg style="left:597px;top:766.5px" width="6" height="9"><path d="M5 0.8 L1.3 4.5 L5 8.2" stroke="#606060" stroke-width="1.8" fill="none"/></svg>
<svg style="left:1003px;top:766.5px" width="6" height="9"><path d="M1 0.8 L4.7 4.5 L1 8.2" stroke="#606060" stroke-width="1.8" fill="none"/></svg>
<div class="a hb" style="left:1375px;top:216px;width:21px;height:21px;background:#fff"><svg width="19" height="19" style="left:0;top:0"><path d="M12.65 6.15 A4.6 4.6 0 1 0 13.4 11.7" fill="none" stroke="#00A6B6" stroke-width="2.1"/><path d="M10.8 8.8 L14.9 4 V8.8Z" fill="#00A6B6"/></svg></div>
<div class="a" style="left:1044px;top:244px;width:296px;height:31px;background:#EBF0FA"></div>
<div class="t pd" style="left:1052.00px;top:250px;letter-spacing:0.620px">VENDREDI</div>
<div class="t pd" style="left:1190.50px;top:250px;letter-spacing:0.877px">13/10/2023</div>
<div class="a" style="left:1383px;top:240px;width:16px;height:81px;background:#F0F0F0"></div>
<div class="a" style="left:1384px;top:257px;width:14px;height:24px;background:#CDCDCD"></div>
<svg style="left:1386.5px;top:246px" width="9" height="6"><path d="M0.8 5 L4.5 1.3 L8.2 5" stroke="#606060" stroke-width="1.8" fill="none"/></svg>
<svg style="left:1386.5px;top:293px" width="9" height="6"><path d="M0.8 1 L4.5 4.7 L8.2 1" stroke="#606060" stroke-width="1.8" fill="none"/></svg>
<div class="a" style="left:1043px;top:305px;width:340px;height:16px;background:#F0F0F0"></div>
<div class="a" style="left:1060px;top:306px;width:17px;height:14px;background:#CDCDCD"></div>
<svg style="left:1048px;top:308.5px" width="6" height="9"><path d="M5 0.8 L1.3 4.5 L5 8.2" stroke="#606060" stroke-width="1.8" fill="none"/></svg>
<svg style="left:1371px;top:308.5px" width="6" height="9"><path d="M1 0.8 L4.7 4.5 L1 8.2" stroke="#606060" stroke-width="1.8" fill="none"/></svg>
<div class="a" style="left:1040px;top:334px;width:273px;height:23px;background:#00A6B6"></div>
<div class="t ph" style="left:1043.00px;top:340px;letter-spacing:-0.154px">Workflow commande</div>
<div class="a hb" style="left:1314px;top:335px;width:21px;height:21px;background:#fff"><svg width="19" height="19" style="left:0;top:0"><rect x="4" y="5" width="11" height="9" rx="0.8" fill="#00A6B6"/><rect x="5" y="7.2" width="9" height="5.8" fill="#7CD2D9"/><path d="M5 9.9 H14" stroke="#fff" stroke-width="0.9"/><path d="M6.6 7.2 V13" stroke="#fff" stroke-width="0.8"/></svg></div>
<div class="a hb" style="left:1337px;top:335px;width:21px;height:21px;background:#EEEEEE"><svg width="19" height="19" style="left:0;top:0"><path d="M1 16 V9.5 Q1 1.3 9 1.3 H18 V14.5 Q12.5 13.8 10 12.3 Q7.5 11 6 16Z" fill="#00A6B6"/></svg></div>
<div class="a hb" style="left:1360px;top:335px;width:21px;height:21px;background:#fff"><svg width="19" height="19" style="left:0;top:0"><rect x="4" y="5" width="11" height="9" rx="0.8" fill="#00A6B6"/><rect x="5" y="7.2" width="9" height="5.8" fill="#7CD2D9"/><path d="M5 9.9 H14" stroke="#fff" stroke-width="0.9"/><path d="M6.6 7.2 V13" stroke="#fff" stroke-width="0.8"/></svg></div>
<div class="a hb" style="left:1383px;top:335px;width:21px;height:21px;background:#fff"><svg width="19" height="19" style="left:0;top:0"><path d="M12.65 6.15 A4.6 4.6 0 1 0 13.4 11.7" fill="none" stroke="#00A6B6" stroke-width="2.1"/><path d="M10.8 8.8 L14.9 4 V8.8Z" fill="#00A6B6"/></svg></div>
<div class="a" style="left:1040px;top:360px;width:367px;height:137px;border:1px solid #5A5A5A;background:#fff"></div>
<div class="a bar" style="left:1050px;top:378px;width:99px;height:88px"></div>
<div class="a bar" style="left:1167px;top:412px;width:99px;height:54px"></div>
<div class="a bar" style="left:1284px;top:361px;width:99px;height:105px"></div>
<div class="t cl" style="left:1092.02px;top:414px;letter-spacing:0.000px">117</div>
<div class="t cl" style="left:1211.44px;top:431px;letter-spacing:0.000px">72</div>
<div class="t cl" style="left:1325.66px;top:404px;letter-spacing:0.000px">144</div>
<div class="t clb" style="left:1078.45px;top:487px;letter-spacing:0.139px">A envoyer</div>
<div class="t clb" style="left:1198.50px;top:487px;letter-spacing:0.116px">A valider</div>
<div class="t clb" style="left:1314.55px;top:487px;letter-spacing:0.124px">A vérifier</div>
<div class="a" style="left:1415px;top:230px;width:305px;height:23px;background:#00A6B6"></div>
<div class="t ph" style="left:1419.00px;top:236px;letter-spacing:-0.258px">Nombre de commandes</div>
<div class="a hb" style="left:1721px;top:231px;width:21px;height:21px;background:#fff"><svg width="19" height="19" style="left:0;top:0"><rect x="4" y="5" width="11" height="9" rx="0.8" fill="#00A6B6"/><rect x="5" y="7.2" width="9" height="5.8" fill="#7CD2D9"/><path d="M5 9.9 H14" stroke="#fff" stroke-width="0.9"/><path d="M6.6 7.2 V13" stroke="#fff" stroke-width="0.8"/></svg></div>
<div class="a hb" style="left:1744px;top:231px;width:21px;height:21px;background:#fff"><svg width="19" height="19" style="left:0;top:0"><rect x="4" y="5" width="11" height="9" rx="0.8" fill="#00A6B6"/><rect x="5" y="7.2" width="9" height="5.8" fill="#7CD2D9"/><path d="M5 9.9 H14" stroke="#fff" stroke-width="0.9"/><path d="M6.6 7.2 V13" stroke="#fff" stroke-width="0.8"/></svg></div>
<div class="a hb" style="left:1767px;top:231px;width:21px;height:21px;background:#fff"><svg width="19" height="19" style="left:0;top:0"><rect x="4" y="5" width="11" height="9" rx="0.8" fill="#00A6B6"/><rect x="5" y="7.2" width="9" height="5.8" fill="#7CD2D9"/><path d="M5 9.9 H14" stroke="#fff" stroke-width="0.9"/><path d="M6.6 7.2 V13" stroke="#fff" stroke-width="0.8"/></svg></div>
<div class="a hb" style="left:1790px;top:231px;width:21px;height:21px;background:#fff"><svg width="19" height="19" style="left:0;top:0"><path d="M12.65 6.15 A4.6 4.6 0 1 0 13.4 11.7" fill="none" stroke="#00A6B6" stroke-width="2.1"/><path d="M10.8 8.8 L14.9 4 V8.8Z" fill="#00A6B6"/></svg></div>
<div class="a" style="left:1415px;top:256px;width:399px;height:245px;border:1px solid #5A5A5A;background:#fff"></div>
<div class="a bar" style="left:1426px;top:468px;width:108px;height:2px"></div>
<div class="a bar" style="left:1553px;top:468px;width:108px;height:2px"></div>
<div class="a bar" style="left:1680px;top:276px;width:108px;height:194px"></div>
<div class="t cl" style="left:1477.22px;top:471px;letter-spacing:0.000px">3</div>
<div class="t cl" style="left:1604.22px;top:471px;letter-spacing:0.000px">4</div>
<div class="t cl" style="left:1725.66px;top:365px;letter-spacing:0.000px">287</div>
<div class="t clb" style="left:1460.50px;top:491px;letter-spacing:0.069px">Bloquées</div>
<div class="t clb" style="left:1585.90px;top:491px;letter-spacing:0.073px">En attente</div>
<div class="t clb" style="left:1721.10px;top:491px;letter-spacing:0.183px">Retard</div>
<div class="a" style="left:1038px;top:510px;width:341px;height:23px;background:#00A6B6"></div>
<div class="t ph" style="left:1042.00px;top:516px;letter-spacing:-0.122px">Lignes gérées pour la semaine</div>
<div class="a hb" style="left:1380px;top:511px;width:21px;height:21px;background:#fff"><svg width="19" height="19" style="left:0;top:0"><path d="M12.65 6.15 A4.6 4.6 0 1 0 13.4 11.7" fill="none" stroke="#00A6B6" stroke-width="2.1"/><path d="M10.8 8.8 L14.9 4 V8.8Z" fill="#00A6B6"/></svg></div>
<div class="a" style="left:1038px;top:536px;width:366px;height:243px;border:1px solid #5A5A5A;background:#fff"></div>
<div class="a bar" style="left:1186px;top:688px;width:27px;height:40px"></div>
<div class="a bar" style="left:1255px;top:537px;width:27px;height:191px"></div>
<div class="a bar" style="left:1324px;top:688px;width:28px;height:40px"></div>
<div class="t cl" style="left:1197.22px;top:701px;letter-spacing:0.000px">1</div>
<div class="t cl" style="left:1265.22px;top:624px;letter-spacing:0.000px">5</div>
<div class="t cl" style="left:1335.22px;top:701px;letter-spacing:0.000px">1</div>
<div class="t cl" style="left:1058.32px;top:731px;letter-spacing:0.000px">0</div>
<div class="t cl" style="left:1086.92px;top:731px;letter-spacing:0.000px">0</div>
<div class="t clb" style="left:1051.30px;top:749px;letter-spacing:0.049px">Cre.</div>
<div class="t clb" style="left:1077.70px;top:749px;letter-spacing:0.224px">Mod.</div>
<div class="t clb" style="left:1063.80px;top:769px;letter-spacing:0.045px">Lundi</div>
<div class="t cl" style="left:1127.37px;top:731px;letter-spacing:0.000px">0</div>
<div class="t cl" style="left:1155.97px;top:731px;letter-spacing:0.000px">0</div>
<div class="t clb" style="left:1120.35px;top:749px;letter-spacing:0.049px">Cre.</div>
<div class="t clb" style="left:1146.75px;top:749px;letter-spacing:0.224px">Mod.</div>
<div class="t clb" style="left:1133.13px;top:769px;letter-spacing:0.082px">Mardi</div>
<div class="t cl" style="left:1225.02px;top:731px;letter-spacing:0.000px">0</div>
<div class="t clb" style="left:1189.40px;top:749px;letter-spacing:0.049px">Cre.</div>
<div class="t clb" style="left:1215.80px;top:749px;letter-spacing:0.224px">Mod.</div>
<div class="t clb" style="left:1194.61px;top:769px;letter-spacing:0.087px">Mercredi</div>
<div class="t cl" style="left:1294.07px;top:731px;letter-spacing:0.000px">0</div>
<div class="t clb" style="left:1258.45px;top:749px;letter-spacing:0.049px">Cre.</div>
<div class="t clb" style="left:1284.85px;top:749px;letter-spacing:0.224px">Mod.</div>
<div class="t clb" style="left:1271.64px;top:769px;letter-spacing:0.094px">Jeudi</div>
<div class="t cl" style="left:1363.12px;top:731px;letter-spacing:0.000px">0</div>
<div class="t clb" style="left:1327.50px;top:749px;letter-spacing:0.049px">Cre.</div>
<div class="t clb" style="left:1353.90px;top:749px;letter-spacing:0.224px">Mod.</div>
<div class="t clb" style="left:1332.27px;top:769px;letter-spacing:0.179px">Vendredi</div>
<div class="a" style="left:1415px;top:511px;width:351px;height:23px;background:#00A6B6"></div>
<div class="t ph" style="left:1419.00px;top:517px;letter-spacing:-0.010px">Client bloqués&nbsp; (19)</div>
<div class="a hb" style="left:1767px;top:512px;width:21px;height:21px;background:#fff"><svg width="19" height="19" style="left:0;top:0"><rect x="4" y="5" width="11" height="9" rx="0.8" fill="#00A6B6"/><rect x="5" y="7.2" width="9" height="5.8" fill="#7CD2D9"/><path d="M5 9.9 H14" stroke="#fff" stroke-width="0.9"/><path d="M6.6 7.2 V13" stroke="#fff" stroke-width="0.8"/></svg></div>
<div class="a hb" style="left:1790px;top:512px;width:21px;height:21px;background:#fff"><svg width="19" height="19" style="left:0;top:0"><path d="M12.65 6.15 A4.6 4.6 0 1 0 13.4 11.7" fill="none" stroke="#00A6B6" stroke-width="2.1"/><path d="M10.8 8.8 L14.9 4 V8.8Z" fill="#00A6B6"/></svg></div>
<div class="t pt" style="left:1574.00px;top:540px;letter-spacing:-0.877px">Client</div>
<div class="a" style="left:1602px;top:534px;width:185px;height:23px;border:1px solid #646464;background:#fff"></div>
<div class="a sb" style="left:1790px;top:535px;width:21px;height:21px"><div class="a" style="left:1px;top:1px;width:17px;height:17px;background:#F4F4F4"></div><svg width="19" height="19" style="left:0;top:0"><circle cx="7.6" cy="7.3" r="3.9" fill="#fff" stroke="#B0B0B0" stroke-width="1"/><path d="M10.3 10 L15.2 14.4" stroke="#3A3A3A" stroke-width="2"/><path d="M4 15.5 H15" stroke="#DADADA" stroke-width="1"/></svg></div>
<div class="a" style="left:1413px;top:559px;width:385px;height:203px;overflow:hidden">
<div class="t pid" style="left:14.00px;top:7px;letter-spacing:0.451px">000003</div>
<div class="t pb" style="left:78.00px;top:7px;letter-spacing:-0.018px">BIGMAT CAEN</div>
<div class="a eb ebs" style="left:9px;top:25px;width:22px;height:22px"><svg width="20" height="20" style="left:0;top:0"><g transform="translate(3.9,14.6) rotate(-45) scale(0.57)"><path d="M0 0 L4 -4 H21.3 V4 H4Z" fill="#00A6B6"/><path d="M22.2 -4 H24.7 Q26.2 -4 26.2 -2.5 V2.5 Q26.2 4 24.7 4 H22.2Z" fill="#00A6B6"/><path d="M4.6 -3.2 L4.6 1" stroke="#fff" stroke-width="1.1"/><path d="M6.5 -2 H17.5" stroke="#7AD3DA" stroke-width="0.8" stroke-dasharray="1 0.6"/></g></svg></div>
<div class="t pt" style="left:49.00px;top:28px;letter-spacing:-1.144px">Pro</div>
<div class="t pt" style="left:105.00px;top:28px;letter-spacing:-1.261px">OUEST</div>
<div class="t pt" style="left:173.00px;top:28px;letter-spacing:-0.732px">ENCOURS / Limite En Cours Dépassée</div>
<div class="a" style="left:4px;top:48px;width:380px;height:1px;background:#000"></div>
<div class="t pid" style="left:14.00px;top:59px;letter-spacing:0.451px">000007</div>
<div class="t pb" style="left:78.00px;top:59px;letter-spacing:0.080px">BIGMAT AUCH</div>
<div class="a eb ebs" style="left:9px;top:77px;width:22px;height:22px"><svg width="20" height="20" style="left:0;top:0"><g transform="translate(3.9,14.6) rotate(-45) scale(0.57)"><path d="M0 0 L4 -4 H21.3 V4 H4Z" fill="#00A6B6"/><path d="M22.2 -4 H24.7 Q26.2 -4 26.2 -2.5 V2.5 Q26.2 4 24.7 4 H22.2Z" fill="#00A6B6"/><path d="M4.6 -3.2 L4.6 1" stroke="#fff" stroke-width="1.1"/><path d="M6.5 -2 H17.5" stroke="#7AD3DA" stroke-width="0.8" stroke-dasharray="1 0.6"/></g></svg></div>
<div class="t pt" style="left:49.00px;top:80px;letter-spacing:-1.144px">Pro</div>
<div class="t pt" style="left:105.00px;top:80px;letter-spacing:-1.322px">SUD</div>
<div class="t pt" style="left:173.00px;top:80px;letter-spacing:-0.732px">ENCOURS / Limite En Cours Dépassée</div>
<div class="a" style="left:4px;top:100px;width:380px;height:1px;background:#000"></div>
<div class="t pid" style="left:14.00px;top:111px;letter-spacing:0.451px">000009</div>
<div class="t pb" style="left:78.00px;top:111px;letter-spacing:0.227px">BIGMAT AYTRE</div>
<div class="a eb ebs" style="left:9px;top:129px;width:22px;height:22px"><svg width="20" height="20" style="left:0;top:0"><g transform="translate(3.9,14.6) rotate(-45) scale(0.57)"><path d="M0 0 L4 -4 H21.3 V4 H4Z" fill="#00A6B6"/><path d="M22.2 -4 H24.7 Q26.2 -4 26.2 -2.5 V2.5 Q26.2 4 24.7 4 H22.2Z" fill="#00A6B6"/><path d="M4.6 -3.2 L4.6 1" stroke="#fff" stroke-width="1.1"/><path d="M6.5 -2 H17.5" stroke="#7AD3DA" stroke-width="0.8" stroke-dasharray="1 0.6"/></g></svg></div>
<div class="t pt" style="left:49.00px;top:132px;letter-spacing:-1.144px">Pro</div>
<div class="t pt" style="left:105.00px;top:132px;letter-spacing:-1.261px">OUEST</div>
<div class="t pt" style="left:173.00px;top:132px;letter-spacing:-0.732px">ENCOURS / Limite En Cours Dépassée</div>
<div class="a" style="left:4px;top:152px;width:380px;height:1px;background:#000"></div>
<div class="t pid" style="left:14.00px;top:163px;letter-spacing:0.451px">000010</div>
<div class="t pb" style="left:78.00px;top:163px;letter-spacing:-0.039px">BIGMAT CHAMBLY BROCARD</div>
<div class="a eb ebs" style="left:9px;top:181px;width:22px;height:22px"><svg width="20" height="20" style="left:0;top:0"><g transform="translate(3.9,14.6) rotate(-45) scale(0.57)"><path d="M0 0 L4 -4 H21.3 V4 H4Z" fill="#00A6B6"/><path d="M22.2 -4 H24.7 Q26.2 -4 26.2 -2.5 V2.5 Q26.2 4 24.7 4 H22.2Z" fill="#00A6B6"/><path d="M4.6 -3.2 L4.6 1" stroke="#fff" stroke-width="1.1"/><path d="M6.5 -2 H17.5" stroke="#7AD3DA" stroke-width="0.8" stroke-dasharray="1 0.6"/></g></svg></div>
<div class="t pt" style="left:49.00px;top:184px;letter-spacing:-1.144px">Pro</div>
<div class="t pt" style="left:105.00px;top:184px;letter-spacing:-1.115px">NORD</div>
<div class="t pt" style="left:173.00px;top:184px;letter-spacing:-0.732px">ENCOURS / Limite En Cours Dépassée</div>
</div>
<div class="a" style="left:1798px;top:559px;width:16px;height:219px;background:#F0F0F0"></div>
<div class="a" style="left:1799px;top:576px;width:14px;height:36px;background:#CDCDCD"></div>
<svg style="left:1801.5px;top:565px" width="9" height="6"><path d="M0.8 5 L4.5 1.3 L8.2 5" stroke="#606060" stroke-width="1.8" fill="none"/></svg>
<svg style="left:1801.5px;top:750px" width="9" height="6"><path d="M0.8 1 L4.5 4.7 L8.2 1" stroke="#606060" stroke-width="1.8" fill="none"/></svg>
<div class="a" style="left:1413px;top:762px;width:385px;height:16px;background:#F0F0F0"></div>
<div class="a" style="left:1430px;top:763px;width:17px;height:14px;background:#CDCDCD"></div>
<svg style="left:1418px;top:765.5px" width="6" height="9"><path d="M5 0.8 L1.3 4.5 L5 8.2" stroke="#606060" stroke-width="1.8" fill="none"/></svg>
<svg style="left:1786px;top:765.5px" width="6" height="9"><path d="M1 0.8 L4.7 4.5 L1 8.2" stroke="#606060" stroke-width="1.8" fill="none"/></svg>
<!-- ribbon bottom line -->
<div class="a" style="left:8px;top:159px;width:1912px;height:1px;background:#D5DEE6"></div>
</body></html>
